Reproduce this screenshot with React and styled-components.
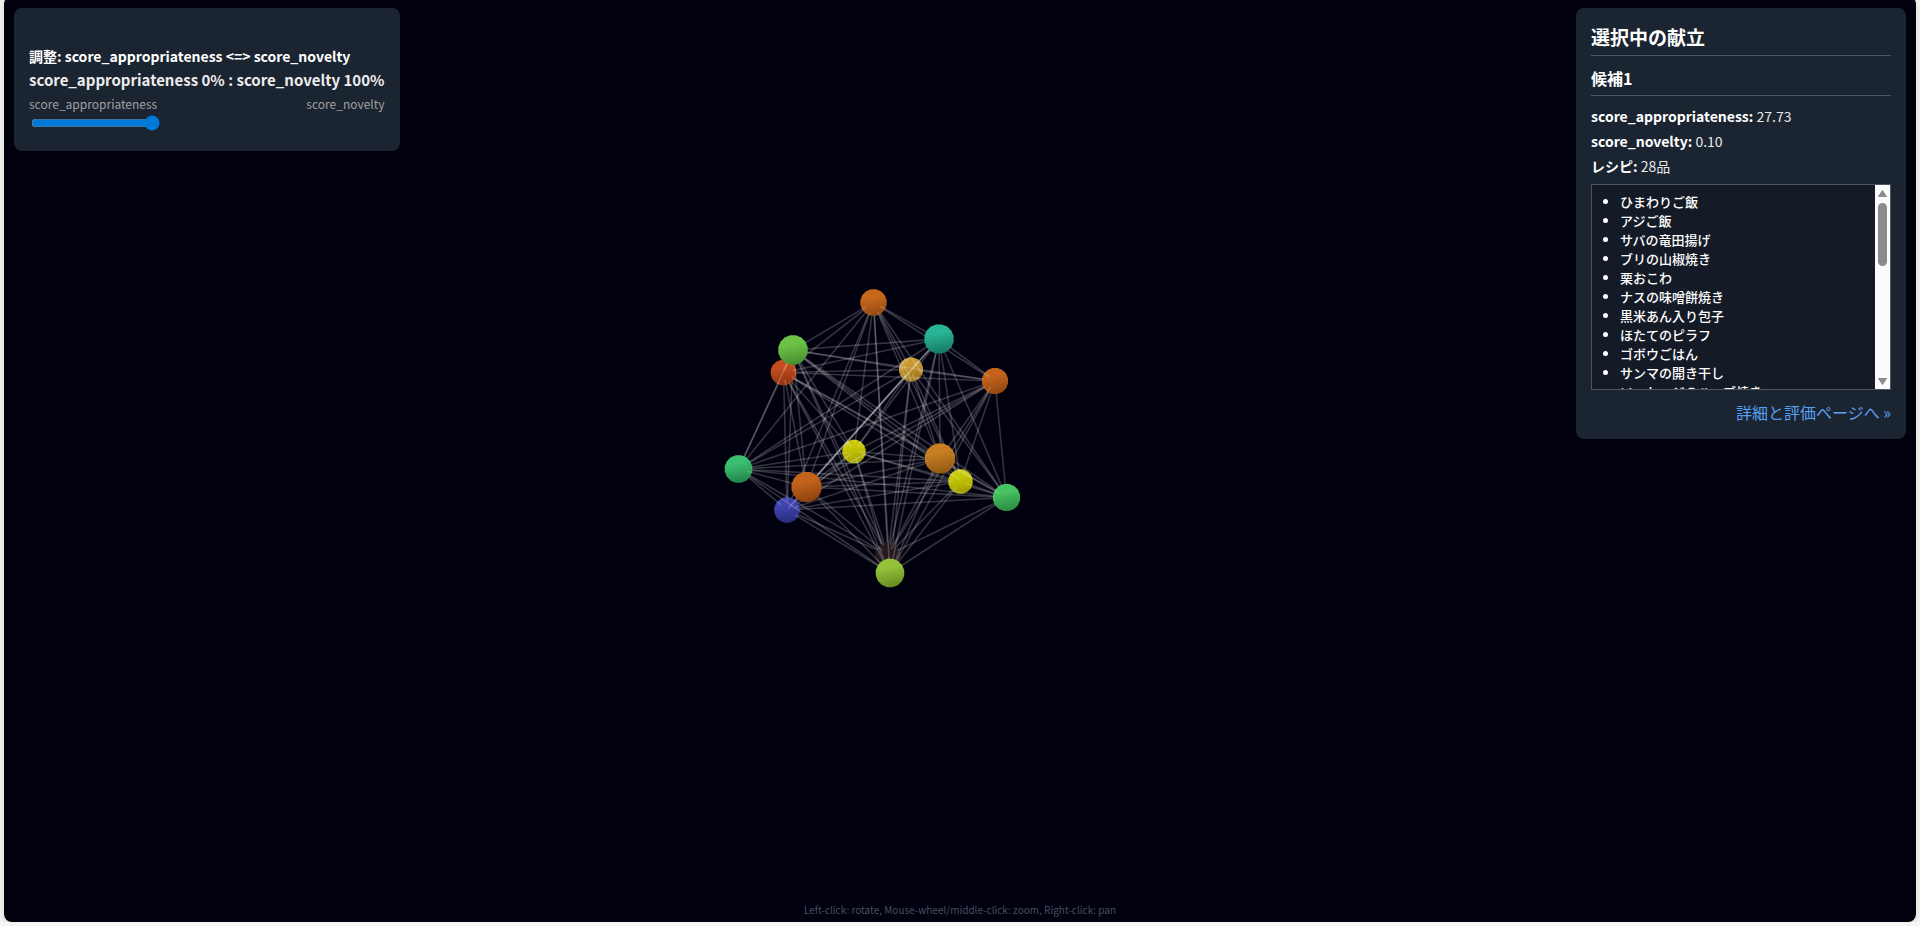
import React, { useState } from "react";
import styled, { createGlobalStyle } from "styled-components";

const GlobalStyle = createGlobalStyle`
  *, *::before, *::after { box-sizing: border-box; }
  body {
    margin: 0;
    overflow: hidden;
    background: #f5f5f5;
    color: #fff;
    font-family: "Noto Sans CJK JP", sans-serif;
  }
`;

const Stage = styled.main`
  position: relative;
  height: 100vh;
  margin: -4px 4px 0;
  border-radius: 8px;
  overflow: hidden;
  background: #00000f;
  box-shadow: 0 2px 8px rgba(0, 0, 0, 0.15);
`;

const Canvas = styled.svg`
  display: block;
  width: 100%;
  height: 100%;
`;

const Panel = styled.section`
  position: absolute;
  top: 12px;
  border-radius: 8px;
  background: #1b2431;
`;

const ControlPanel = styled(Panel)`
  left: 10px;
  padding: 36px 15px 21px;
`;

const InfoPanel = styled(Panel)`
  right: 10px;
  width: 330px;
  padding: 15px;
`;

const ControlTitle = styled.label`
  display: block;
  font-size: 14px;
  font-weight: 700;
  line-height: 24px;
`;

const Ratio = styled.output`
  display: block;
  font-size: 15px;
  font-weight: 700;
  line-height: 24px;
  color: #ececec;
`;

const ScaleLabels = styled.div`
  display: flex;
  justify-content: space-between;
  font-size: 12px;
  line-height: 24px;
  color: #a0a0a0;
`;

const Slider = styled.input`
  display: block;
  width: 129px;
  height: 14px;
  margin: 0 2px;
  accent-color: #0078d7;
`;

const Title = styled.h2`
  margin: 0;
  padding-bottom: 4px;
  border-bottom: 1px solid #4b5563;
  font-size: 19px;
  line-height: 28px;
`;

const Candidate = styled.h3`
  margin: 0 0 8px;
  padding: 10px 0 5px;
  border-bottom: 1px solid #4b5563;
  font-size: 16px;
  line-height: 24px;
`;

const Fact = styled.p`
  margin: 0;
  font-size: 14px;
  line-height: 25px;
  color: #e8e8e8;

  strong { color: #fff; }
`;

const ListBox = styled.div`
  display: flex;
  height: 206px;
  margin-top: 5px;
  border: 1px solid #4b5563;
  background: #151b26;
`;

const RecipeList = styled.ul`
  flex: 1;
  margin: 0;
  padding: 7px 8px 7px 28px;
  overflow-y: auto;
  scrollbar-width: none;
  font-size: 13px;
  font-weight: 500;
  line-height: 19px;
`;

const ScrollTrack = styled.div`
  display: flex;
  flex-direction: column;
  align-items: center;
  justify-content: space-between;
  width: 15px;
  padding: 5px 0 4px;
  background: #fcfcfc;
`;

const ScrollThumb = styled.div`
  width: 9px;
  height: 63px;
  margin: 6px 0 auto;
  border-radius: 5px;
  background: #8b8b8b;
`;

const Arrow = styled.svg`
  display: block;
  width: 9px;
  height: 7px;
  fill: #8b8b8b;
`;

const DetailLink = styled.a`
  display: block;
  margin-top: 10px;
  font-size: 16px;
  line-height: 24px;
  text-align: right;
  text-decoration: none;
  color: #58a0f4;
`;

const Hint = styled.p`
  position: absolute;
  right: 0;
  bottom: 4px;
  left: 0;
  margin: 0;
  font-size: 10px;
  line-height: 16px;
  text-align: center;
  color: #475160;
`;

const nodes = [
  { x: 873.5, y: 302.5, r: 13.4, color: "#c6671c", dark: "#924912" },
  { x: 793, y: 350, r: 15, color: "#6cc346", dark: "#468c2e" },
  { x: 783.5, y: 372.5, r: 13, color: "#c24c1b", dark: "#8e3311" },
  { x: 939, y: 339, r: 14.9, color: "#28b496", dark: "#167860" },
  { x: 911, y: 369.5, r: 12.2, color: "#c6982e", dark: "#9c721a" },
  { x: 995, y: 381, r: 13.3, color: "#c4621c", dark: "#904611" },
  { x: 738.5, y: 469, r: 14, color: "#3abe70", dark: "#24824a" },
  { x: 806.5, y: 487, r: 15.3, color: "#c4631b", dark: "#8c420f" },
  { x: 787, y: 510, r: 12.9, color: "#4044b0", dark: "#292c7e" },
  { x: 854, y: 451.5, r: 11.9, color: "#c8c806", dark: "#a0a000" },
  { x: 940, y: 458.5, r: 15.4, color: "#c68022", dark: "#905812" },
  { x: 960.5, y: 481.5, r: 12.4, color: "#c8c806", dark: "#9c9c00" },
  { x: 1006.5, y: 497.5, r: 13.8, color: "#46c262", dark: "#2a8a40" },
  { x: 890, y: 573, r: 14.5, color: "#93c23a", dark: "#668a24" },
  { x: 888, y: 555, r: 12.8, color: "#261a20", dark: "#20151b" },
].map((node, id) => ({ ...node, id, depth: 13700 / node.r }));

const farToNear = [...nodes].sort((a, b) => b.depth - a.depth);

const outline = ({ x, y, r }) =>
  Array.from({ length: 16 }, (_, i) => {
    const angle = ((i + 0.5) * Math.PI) / 8;
    return `${x + r * Math.cos(angle)},${y + r * Math.sin(angle)}`;
  }).join(" ");

// A link leaves the far sphere at its surface, so it starts inside the disc.
function linkStart(far, near) {
  const dx = near.x - far.x;
  const dy = near.y - far.y;
  const length = Math.hypot(dx, dy, far.depth - near.depth);
  return { x: far.x + (dx * far.r) / length, y: far.y + (dy * far.r) / length };
}

function Graph() {
  return (
    <Canvas viewBox="4 -4 1912 926" role="img" aria-label="献立グラフ">
      <defs>
        {nodes.map((n) => (
          <linearGradient key={n.id} id={`shade-${n.id}`} x1="0.4" y1="0" x2="0.6" y2="1">
            <stop offset="0.3" stopColor={n.color} />
            <stop offset="1" stopColor={n.dark} />
          </linearGradient>
        ))}
      </defs>
      {farToNear.map((far, index) => (
        <g key={far.id}>
          <polygon points={outline(far)} fill={`url(#shade-${far.id})`} />
          {farToNear.slice(index + 1).map((near) => {
            const start = linkStart(far, near);
            return (
              <line
                key={near.id}
                x1={start.x}
                y1={start.y}
                x2={near.x}
                y2={near.y}
                stroke="#f0f0f0"
                strokeOpacity="0.21"
                strokeWidth="1.6"
              />
            );
          })}
        </g>
      ))}
    </Canvas>
  );
}

const recipes = [
  "ひまわりご飯",
  "アジご飯",
  "サバの竜田揚げ",
  "ブリの山椒焼き",
  "栗おこわ",
  "ナスの味噌餅焼き",
  "黒米あん入り包子",
  "ほたてのピラフ",
  "ゴボウごはん",
  "サンマの開き干し",
  "ソーセージのハーブ焼き",
];

export default function App() {
  const [novelty, setNovelty] = useState(100);
  return (
    <>
      <GlobalStyle />
      <Stage>
        <Graph />
        <ControlPanel>
          <ControlTitle htmlFor="balance">
            調整: score_appropriateness &lt;=&gt; score_novelty
          </ControlTitle>
          <Ratio htmlFor="balance">
            score_appropriateness {100 - novelty}% : score_novelty {novelty}%
          </Ratio>
          <ScaleLabels>
            <span>score_appropriateness</span>
            <span>score_novelty</span>
          </ScaleLabels>
          <Slider
            id="balance"
            type="range"
            min="0"
            max="100"
            value={novelty}
            onChange={(e) => setNovelty(Number(e.target.value))}
          />
        </ControlPanel>
        <InfoPanel>
          <Title>選択中の献立</Title>
          <Candidate>候補1</Candidate>
          <Fact><strong>score_appropriateness:</strong> 27.73</Fact>
          <Fact><strong>score_novelty:</strong> 0.10</Fact>
          <Fact><strong>レシピ:</strong> 28品</Fact>
          <ListBox>
            <RecipeList>
              {recipes.map((name) => <li key={name}>{name}</li>)}
            </RecipeList>
            <ScrollTrack aria-hidden="true">
              <Arrow viewBox="0 0 9 7"><path d="M4.5 0.5 8.5 6.5H0.5Z" stroke="#8b8b8b" strokeLinejoin="round" /></Arrow>
              <ScrollThumb />
              <Arrow viewBox="0 0 9 7"><path d="M4.5 6.5 8.5 0.5H0.5Z" stroke="#8b8b8b" strokeLinejoin="round" /></Arrow>
            </ScrollTrack>
          </ListBox>
          <DetailLink href="#detail">詳細と評価ページへ »</DetailLink>
        </InfoPanel>
        <Hint>Left-click: rotate, Mouse-wheel/middle-click: zoom, Right-click: pan</Hint>
      </Stage>
    </>
  );
}
